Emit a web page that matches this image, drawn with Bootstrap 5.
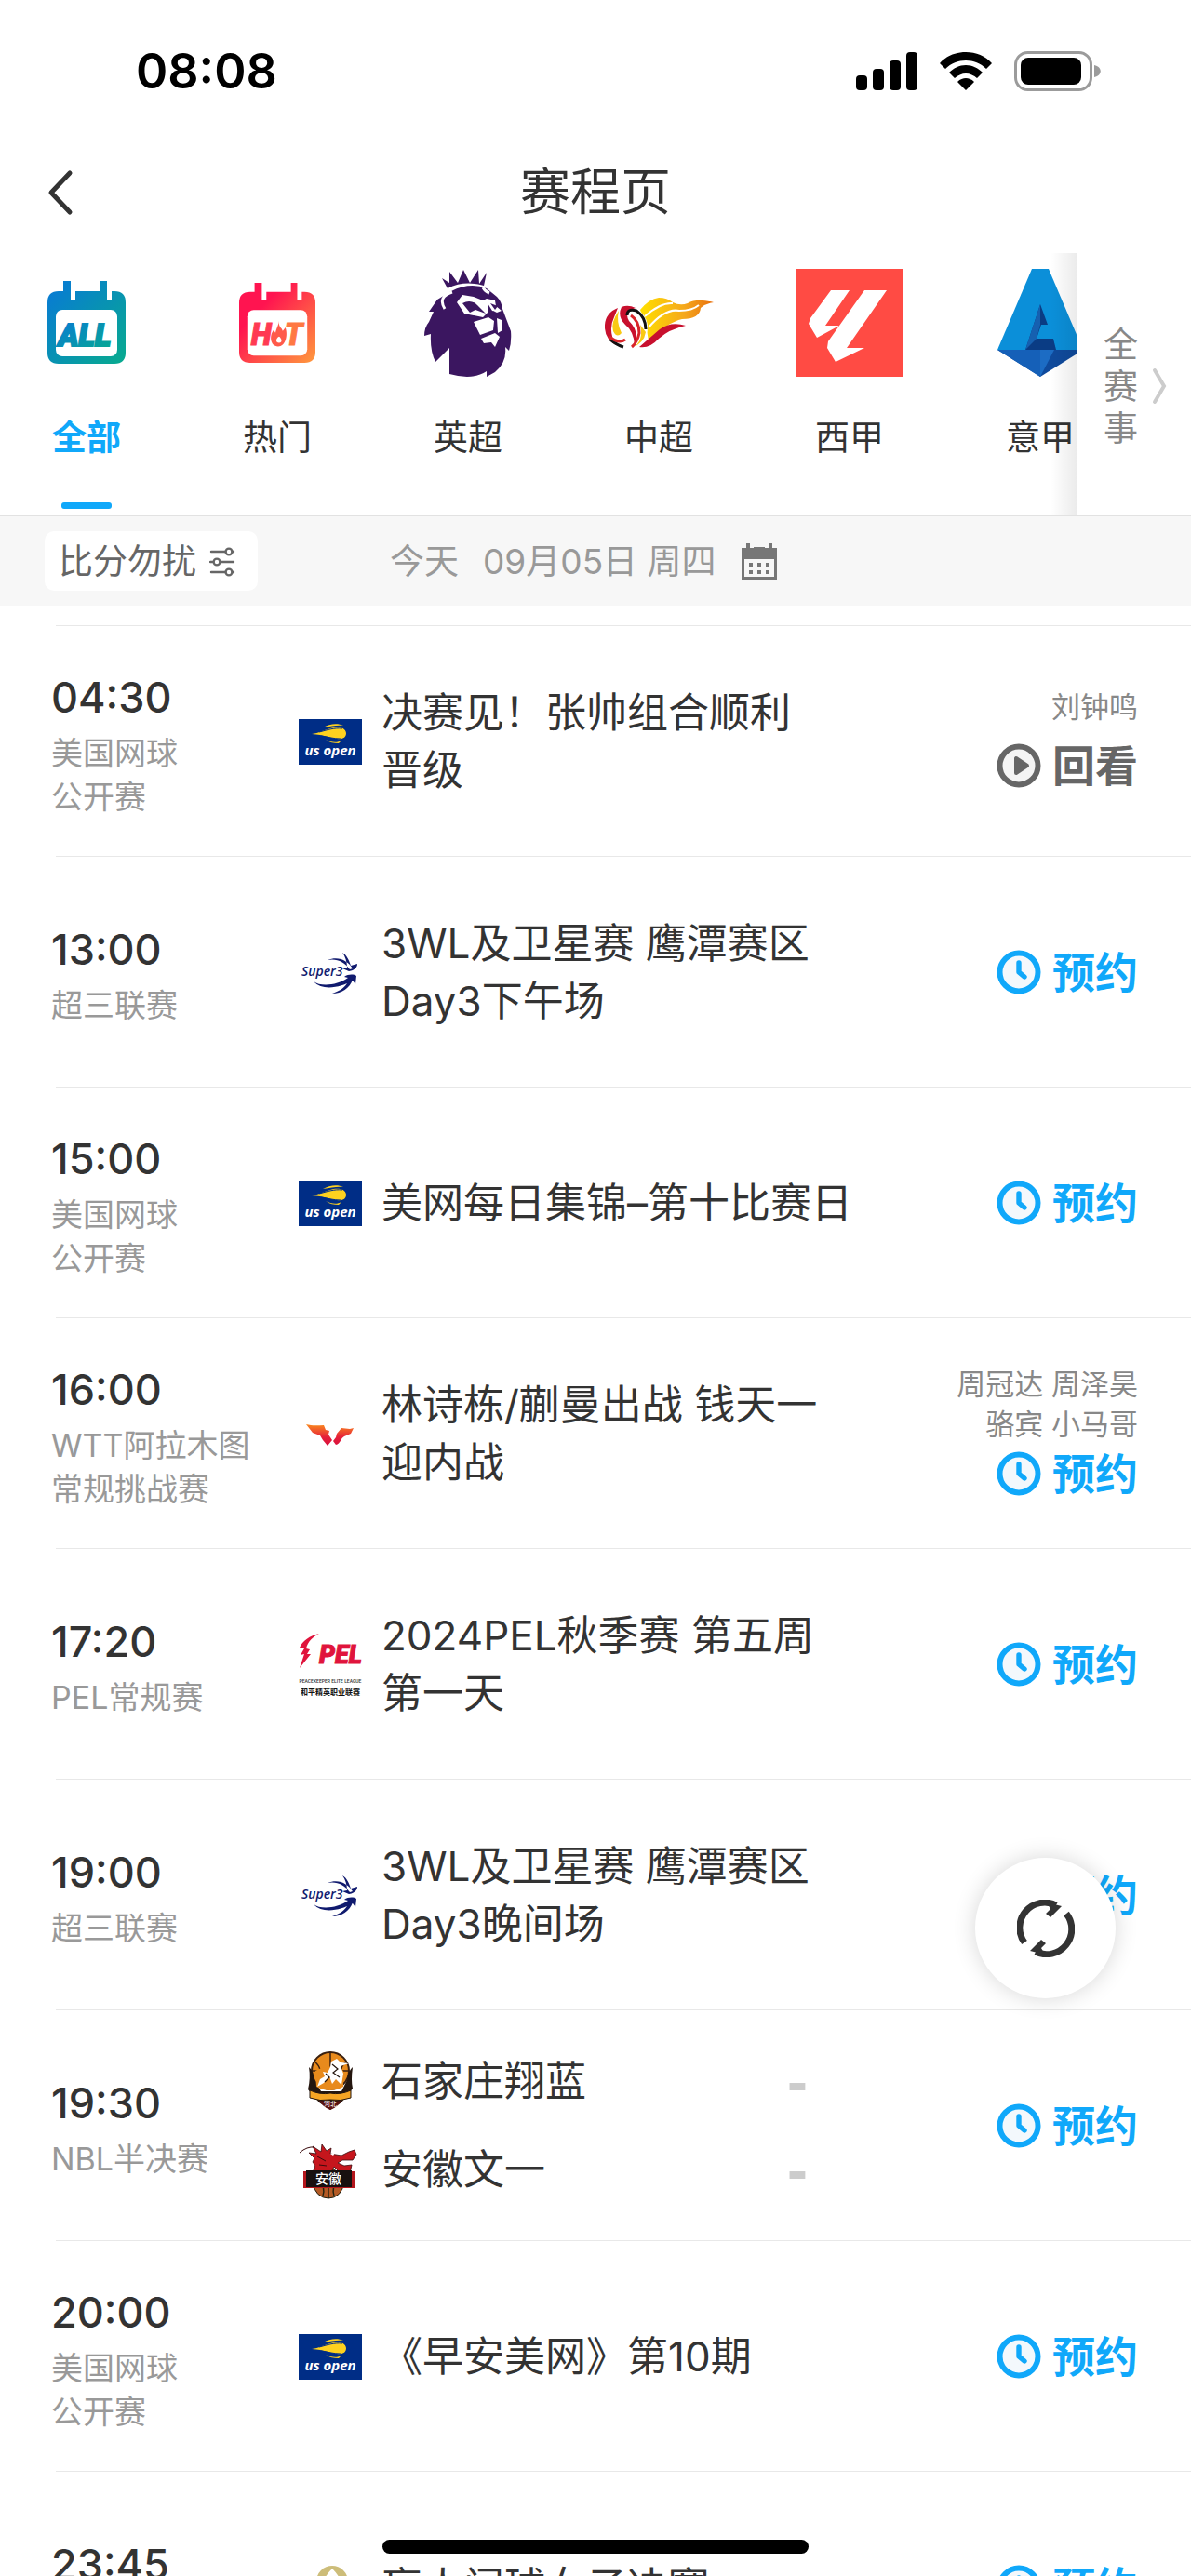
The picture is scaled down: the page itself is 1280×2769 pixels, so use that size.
<!DOCTYPE html>
<html lang="zh-CN">
<head>
<meta charset="utf-8">
<meta name="viewport" content="width=device-width, initial-scale=1">
<title>赛程页</title>
<link href="https://cdn.jsdelivr.net/npm/bootstrap@5.3.0/dist/css/bootstrap.min.css" rel="stylesheet">
<style>
  :root { --ink: #333; --blue: #10a8fa; --muted: #999; --line: #e8e8e8; }
  body { font-family: Inter, "Noto Sans CJK SC", sans-serif; color: var(--ink); background: #fff; }
  svg { display: block; flex: none; }
  button { background: none; border: 0; padding: 0; color: inherit; }
  a { color: inherit; text-decoration: none; }
  .screen { height: 100vh; }
  .statusbar { height: 154px; padding: 0 97px 0 146px; }
  .clock { font-size: 52px; font-weight: 600; line-height: 64px; color: #000; }
  .titlebar { height: 106px; }
  .titlebar h1 { font-size: 54px; font-weight: 400; line-height: 72px; }
  .back { left: 49px; }
  .strip { height: 283px; margin-top: 12px; border-bottom: 1px solid #e2e2e2; }
  .tabs { gap: 89px; padding-left: 35px; padding-top: 17px; }
  .tab-link { width: 116px; flex: none; }
  .tab-link .pic { height: 116px; }
  .tab-link .name { font-size: 37px; line-height: 50px; margin-top: 41px; }
  .tab-link .bar { width: 54px; height: 7px; border-radius: 3px; margin-top: 44px; }
  .tab-link.active .name { color: var(--blue); font-weight: 600; }
  .tab-link.active .bar { background: var(--blue); }
  .all-panel { width: 123px; gap: 15px; padding: 4px 0 0 29px; color: #888; }
  .all-panel span { width: 37px; font-size: 37px; line-height: 45px; }
  .all-panel::before { content: ""; position: absolute; top: 0; bottom: 0; right: 100%; width: 28px; background: linear-gradient(to right, transparent, rgba(0,0,0,.08)); }
  .filterbar { height: 96px; padding-left: 48px; gap: 142px; background: #f7f7f7; font-size: 37px; line-height: 50px; }
  .quiet { height: 64px; padding: 2px 24px 0 15px; gap: 14px; background: #fff; border-radius: 10px; color: #666; }
  .date { color: var(--muted); gap: 26px; padding-top: 2px; }
  .games { padding-top: 21px; margin: 0; }
  .game { height: 248px; margin-left: 60px; padding-right: 57px; border-top: 1px solid var(--line); }
  .when { width: 266px; margin-left: -5px; flex: none; }
  .when time { font-size: 45px; font-weight: 500; line-height: 72px; display: block; }
  .when p { font-size: 34px; line-height: 47px; color: var(--muted); margin: 0; }
  .headline { font-size: 44px; font-weight: 400; line-height: 62px; margin: 0; padding-left: 21px; }
  .hosts { font-size: 31px; line-height: 43px; min-height: 53px; color: #888; margin: 0; }
  .act { font-size: 46px; font-weight: 700; line-height: 64px; gap: 12px; color: var(--blue); }
  .act.replay { color: #666; }
  .team { height: 95px; font-size: 44px; line-height: 62px; }
  .team b { width: 43px; color: #ccc; font: 700 66px/62px "Liberation Sans", sans-serif; }
  .teams { width: 568px; }
  .refresh { width: 151px; height: 151px; right: 81px; bottom: 621px; background: #fff; box-shadow: 0 0 24px rgba(0,0,0,.16); z-index: 2; }
  .homebar { width: 458px; height: 15px; bottom: 24px; background: #000; z-index: 3; }
</style>
</head>
<body>
<svg width="0" height="0" class="position-absolute" aria-hidden="true">
  <defs>
    <linearGradient id="gAll" x1="0" y1="0" x2="1" y2="1"><stop offset="0" stop-color="#0878d8"/><stop offset="1" stop-color="#08ab8e"/></linearGradient>
    <linearGradient id="gHot" x1="0" y1="0" x2="1" y2="1"><stop offset=".3" stop-color="#ff1450"/><stop offset="1" stop-color="#ff9a3d"/></linearGradient>
    <linearGradient id="gFlame" x1="0" y1="0" x2="1" y2="0"><stop offset="0" stop-color="#ffe000"/><stop offset=".6" stop-color="#f5a81c"/><stop offset="1" stop-color="#e8700e"/></linearGradient>
    <linearGradient id="gWtt" x1="0" y1="0" x2="0" y2="1"><stop offset="0" stop-color="#fa8a1e"/><stop offset=".6" stop-color="#e5203a"/><stop offset="1" stop-color="#d8103c"/></linearGradient>
    <symbol id="clock" viewBox="0 0 48 48"><circle cx="24" cy="24" r="20.5" fill="#f3f8fc" stroke="currentColor" stroke-width="6"/><path d="M24 14v10l6 5" fill="none" stroke="currentColor" stroke-width="5.4" stroke-linecap="round" stroke-linejoin="round"/></symbol>
    <symbol id="play" viewBox="0 0 48 48"><circle cx="24" cy="24" r="20.5" fill="#f4f4f4" stroke="currentColor" stroke-width="6"/><path d="M21 16v16l12-8z" fill="currentColor" stroke="currentColor" stroke-width="4" stroke-linejoin="round"/></symbol>
    <symbol id="usopen" viewBox="0 0 68 68">
      <path fill="#002d86" d="M0 10h68v49H0z"/>
      <path fill="#ffd21f" d="M14 26c8-1 12-4 20-6 6-2 16-2 17 5 0 5-4 7-10 6-8-1-13-4-27-5z"/>
      <path fill="#ffd21f" d="M26 19c7-4 16-5 22-2-7-1-13 1-22 2zm3 13c6 3 12 4 17 1l-3 3c-5 0-10-1-14-4z"/>
      <path fill="none" stroke="#002d86" stroke-width="1" d="M22 24c8-2 16-5 25-4M24 28c7 1 13 3 21 3"/>
      <text x="34" y="49" text-anchor="middle" fill="#fff" font-family="Open Sans" font-size="15" font-weight="700" font-style="italic">us open</text>
    </symbol>
    <symbol id="super3" viewBox="0 0 68 68">
      <g fill="#101a6e"><text x="3" y="38" font-family="Open Sans" font-size="14" font-weight="600" font-style="italic">Super3</text>
      <path d="M31 21c10-2 18 2 24 10l3-1c-5-8-15-14-27-9zM47 13c5 3 7 8 9 14l7-2c0 4-3 7-9 8l-7-3 5-1c0-6-2-12-5-16zM16 44c8 6 26 4 37-4l-4-1c4-3 10-3 13-1l-1 9-3-4c-12 7-32 12-42 1zM36 57c9-3 14-7 17-13l5-2c-3 9-12 15-22 15z"/></g>
    </symbol>
    <symbol id="wtt" viewBox="0 0 68 68"><path fill="url(#gWtt)" d="M8 24c7 2 13 1 19 1l2 5 4 1-1 4 4 6-5 6-5-6-3-5-8-3zM59 28l-4 1-9-1-5 6-1 4-3 4 3 4c5-1 5-7 9-9l7-3z"/></symbol>
    <symbol id="pel" viewBox="0 0 68 68">
      <path fill="#e0143c" d="M22 1C12 3 4 9 1 16l5 1-4 7 4-1-5 15 12-15H9l3-5-4-1c2-8 7-12 14-16z"/>
      <text x="22" y="33" fill="#e0143c" stroke="#e0143c" font-family="Roboto" font-size="27" font-weight="900" font-style="italic">PEL</text>
      <text x="34" y="54" text-anchor="middle" fill="#333" font-family="Roboto" font-size="5" font-weight="500">PEACEKEEPER ELITE LEAGUE</text>
      <text x="34" y="67" text-anchor="middle" fill="#111" font-family="Noto Sans CJK SC" font-size="8" font-weight="700">和平精英职业联赛</text>
    </symbol>
  </defs>
</svg>

<div class="screen position-relative overflow-hidden">
  <header>
    <div class="statusbar d-flex align-items-center justify-content-between">
      <span class="clock">08:08</span>
      <div class="d-flex align-items-center gap-4">
        <svg width="66" height="42" viewBox="0 0 66 42"><rect y="25" width="12" height="16" rx="4"/><rect x="18" y="18" width="12" height="23" rx="4"/><rect x="36" y="9" width="12" height="32" rx="4"/><rect x="54" width="12" height="41" rx="4"/></svg>
        <svg width="56" height="42" viewBox="0 0 56 42"><path d="M28 0c11 0 21 4 28 12l-6 6C44 12 36 9 28 9S12 12 6 18l-6-6C7 4 17 0 28 0zm0 14c7 0 13 3 18 8l-6 6c-3-3-8-5-12-5s-9 2-12 5l-6-6c5-5 11-8 18-8zm0 14c3 0 6 1 9 4l-9 9-9-9c3-3 6-4 9-4z"/></svg>
        <svg width="93" height="44" viewBox="0 0 93 44"><rect x="1.5" y="1.5" width="81" height="40" rx="13" fill="none" stroke="#9b9b9b" stroke-width="3"/><rect x="7" y="7" width="65" height="29" rx="8"/><path d="M86 15c9 2 9 11 0 13z" fill="#9b9b9b"/></svg>
      </div>
    </div>
    <div class="titlebar d-flex align-items-center justify-content-center position-relative">
      <button type="button" class="back position-absolute" aria-label="返回"><svg width="32" height="50" viewBox="0 0 32 50"><path d="M26 4L6 25l20 21" fill="none" stroke="#333" stroke-width="5" stroke-linecap="round" stroke-linejoin="round"/></svg></button>
      <h1 class="m-0">赛程页</h1>
    </div>
    <div class="strip d-flex">
      <nav class="tabs d-flex flex-grow-1 overflow-hidden">
        <a href="#" class="tab-link active d-flex flex-column align-items-center">
          <span class="pic d-flex align-items-center"><svg width="84" height="90" viewBox="0 0 84 90"><path fill="url(#gAll)" d="M17 11V0h8v20h5V11h27V0h7v20h5V11h3q12 0 12 12v54q0 12-12 12H12Q0 89 0 77V23Q0 11 12 11z"/><rect x="9" y="31" width="66" height="50" rx="7" fill="#fff"/><text x="40" y="70" text-anchor="middle" fill="url(#gAll)" stroke="url(#gAll)" stroke-width="2" font-family="Roboto" font-size="33" font-weight="900" font-style="italic">ALL</text></svg></span>
          <span class="name">全部</span><span class="bar"></span></a>
        <a href="#" class="tab-link d-flex flex-column align-items-center">
          <span class="pic d-flex align-items-center"><svg width="82" height="88" viewBox="0 0 84 90"><path fill="url(#gHot)" d="M17 11V1h8v19h5V11h27V1h7v19h5V11h3q12 0 12 12v54q0 12-12 12H12Q0 89 0 77V23Q0 11 12 11z"/><rect x="9" y="31" width="66" height="50" rx="7" fill="#fff"/><g fill="#ff3a52" stroke="#ff3a52" font-family="Roboto" font-size="33" font-weight="900" font-style="italic"><text x="13" y="70">H</text><text x="50" y="70" fill="#ff7843" stroke="#ff7843">T</text></g><path fill="#ff5a4a" fill-rule="evenodd" d="M44 43c-1 7 3 7 4 11l3-4c3 9 0 21-8 21-9 0-10-12-5-18l2 3c1-5 3-7 4-13zm0 17c-4 2-4 7 0 7s3-5 0-7z"/></svg></span>
          <span class="name">热门</span></a>
        <a href="#" class="tab-link d-flex flex-column align-items-center">
          <span class="pic"><svg width="94" height="116" viewBox="0 0 94 116"><path fill="#3b1660" d="M19 10l8 5V3l9 12 6-14 7 14 9-14 1 15 8-12-3 14q-21-6-39 3zM29 24q20-10 38-3l11 9q5 5 6 13l9 24q1 12-2 21l-4-4q2 16-11 27l-9 5v-6q-15 10-40 3V85l-15 15q-6-12-5-30l-7 2q0-9 5-15l5-11H5l9-13z"/><path fill="none" stroke="#fff" stroke-width="3" d="M30 25q-16 5-8 18M63 20q2 4 7 6"/><path fill="#fff" d="M35 36l6-8 12 2 10 4 4-2 9 2 1 6 6 5-5 2-4-2-6 2-5 5-20-4zM53 57l16-5 6 4-1 10-14 5zM78 53l5 2 1 11-5 3zM61 75l15-6 5 4-5 11-4-5-8 1z"/><path fill="#3b1660" d="M41 37q9-5 16 2l9 9-11-4-6 3zM71 37l8 3-3 4zM68 37l5 8 4 6-8-3z"/></svg></span>
          <span class="name">英超</span></a>
        <a href="#" class="tab-link d-flex flex-column align-items-center">
          <span class="pic d-flex align-items-center"><svg width="117" height="56" viewBox="0 0 117 56"><path fill="url(#gFlame)" d="M38 14Q48 2 58 1q9 0 15 5 8 4 16 1 10-6 28-1-8 1-14 6-1 12-20 12-15 3-36 24L45 35z"/><path fill="none" stroke="#fff" stroke-width="2" d="M43 21Q60 6 73 7M47 33Q65 12 80 15q14 0 21-6"/><path fill="#c8102e" d="M87 31q-16-5-28 4L37 54q11 2 21-9 11-10 29-14z"/><circle cx="23" cy="33" r="23" fill="#fff"/><path fill="#c8102e" d="M14 12Q-1 18 0 34q1 12 12 18-9-16-2-30zM18 11q7-3 15 1-13 4-7 14 12 12 6 26-1-15-10-22-9-9-4-19z"/><path fill="#f9c913" d="M15 15q-9 13-6 22 4 8 9 2-6-12-3-24zM30 54q12-5 8-24l6 8q-2 12-14 16z"/><path fill="none" stroke="#111" stroke-width="3" d="M24 20q0-8 10-5 10 7 10 20M6 46q7 6 14 8"/><path fill="none" stroke="#d8242a" stroke-width="3" d="M28 20q9 6 9 19-2 10-8 15M5 43q10 8 17 3"/></svg></span>
          <span class="name">中超</span></a>
        <a href="#" class="tab-link d-flex flex-column align-items-center">
          <span class="pic"><svg width="116" height="116" viewBox="0 0 116 116"><path fill="#ff4b44" d="M0 0h116v116H0z"/><path fill="#fff" d="M38 23h20L32 61h15l-24 13-9-15 2-6zM74 23h24L55 85h19l-31 15-9-15 1-7z"/></svg></span>
          <span class="name">西甲</span></a>
        <a href="#" class="tab-link d-flex flex-column align-items-center">
          <span class="pic"><svg width="92" height="116" viewBox="0 0 92 116"><path fill="#0b8fd9" d="M37 0h18l37 87H0z"/><path fill="#0f4a9c" d="M0 87h92l-46 29z"/><path fill="#1560b8" d="M29 87h17v29zM0 87h29l17 29z"/><path fill="#0a3c84" d="M46 38l8 22h-7l-5 15h18l3 12H30z"/><path fill="#1c6cc4" d="M46 87l15 0-15 29z"/><path fill="#1660b0" d="M46 38l-16 49 12-12 4-15z"/></svg></span>
          <span class="name">意甲</span></a>
      </nav>
      <a href="#" class="all-panel position-relative d-flex align-items-center flex-shrink-0"><span>全赛事</span><svg width="16" height="40" viewBox="0 0 16 40"><path d="M3 3l10 17L3 37" fill="none" stroke="#ccc" stroke-width="4" stroke-linecap="round"/></svg></a>
    </div>
  </header>

  <div class="filterbar d-flex align-items-center">
    <button type="button" class="quiet d-flex align-items-center">比分勿扰
      <svg width="28" height="32" viewBox="0 0 28 32" fill="none" stroke="#666" stroke-width="2.4" stroke-linecap="round"><path d="M2 5h15M12 16h14M2 27h15M25 5h1M1 16h2M25 27h1"/><circle cx="21" cy="5" r="3.4"/><circle cx="8" cy="16" r="3.4"/><circle cx="21" cy="27" r="3.4"/></svg>
    </button>
    <div class="date d-flex align-items-center"><span>今天</span><span>09月05日 周四</span>
      <svg width="40" height="40" viewBox="0 0 40 40"><path fill="#777" fill-rule="evenodd" d="M1 5h5V0h4v5h4V4h12v1h4V0h4v5h5v34H1zM4 17v19h32V17z"/><path fill="#777" d="M9 21h4v4H9zm9 0h4v4h-4zm9 0h4v4h-4zM9 29h4v4H9zm9 0h4v4h-4zm9 0h4v4h-4z"/></svg>
    </div>
  </div>

  <ul class="games list-unstyled">
    <li class="game d-flex align-items-center">
      <div class="when"><time>04:30</time><p>美国网球<br>公开赛</p></div>
      <svg width="68" height="68"><use href="#usopen"/></svg>
      <h2 class="headline flex-grow-1">决赛见！张帅组合顺利<br>晋级</h2>
      <div class="d-flex flex-column align-items-end"><p class="hosts text-end">刘钟鸣</p><button type="button" class="act replay d-flex align-items-center"><svg width="48" height="48"><use href="#play"/></svg>回看</button></div>
    </li>
    <li class="game d-flex align-items-center">
      <div class="when"><time>13:00</time><p>超三联赛</p></div>
      <svg width="68" height="68"><use href="#super3"/></svg>
      <h2 class="headline flex-grow-1">3WL及卫星赛 鹰潭赛区<br>Day3下午场</h2>
      <button type="button" class="act d-flex align-items-center"><svg width="48" height="48"><use href="#clock"/></svg>预约</button>
    </li>
    <li class="game d-flex align-items-center">
      <div class="when"><time>15:00</time><p>美国网球<br>公开赛</p></div>
      <svg width="68" height="68"><use href="#usopen"/></svg>
      <h2 class="headline flex-grow-1">美网每日集锦–第十比赛日</h2>
      <button type="button" class="act d-flex align-items-center"><svg width="48" height="48"><use href="#clock"/></svg>预约</button>
    </li>
    <li class="game d-flex align-items-center">
      <div class="when"><time>16:00</time><p>WTT阿拉木图<br>常规挑战赛</p></div>
      <svg width="68" height="68"><use href="#wtt"/></svg>
      <h2 class="headline flex-grow-1">林诗栋/蒯曼出战 钱天一<br>迎内战</h2>
      <div class="d-flex flex-column align-items-end"><p class="hosts text-end">周冠达 周泽昊<br>骆宾 小马哥</p><button type="button" class="act d-flex align-items-center"><svg width="48" height="48"><use href="#clock"/></svg>预约</button></div>
    </li>
    <li class="game d-flex align-items-center">
      <div class="when"><time>17:20</time><p>PEL常规赛</p></div>
      <svg width="68" height="68"><use href="#pel"/></svg>
      <h2 class="headline flex-grow-1">2024PEL秋季赛 第五周<br>第一天</h2>
      <button type="button" class="act d-flex align-items-center"><svg width="48" height="48"><use href="#clock"/></svg>预约</button>
    </li>
    <li class="game d-flex align-items-center">
      <div class="when"><time>19:00</time><p>超三联赛</p></div>
      <svg width="68" height="68"><use href="#super3"/></svg>
      <h2 class="headline flex-grow-1">3WL及卫星赛 鹰潭赛区<br>Day3晚间场</h2>
      <button type="button" class="act d-flex align-items-center"><svg width="48" height="48"><use href="#clock"/></svg>预约</button>
    </li>
    <li class="game d-flex align-items-center">
      <div class="when"><time>19:30</time><p>NBL半决赛</p></div>
      <div class="teams me-auto">
        <div class="team d-flex align-items-center">
          <svg width="68" height="68" viewBox="0 0 68 68"><circle cx="34" cy="23" r="20" fill="#e88a1c" stroke="#3a2010" stroke-width="2"/><path fill="none" stroke="#3a2010" stroke-width="1.5" d="M34 3v20M17 13q10 8 4 20M51 13q-9 8-4 20M14 23h40"/><path fill="#24160f" d="M11 19q5 4 6 14l7 12h22l6-12q1-10 6-14-2 14 0 23L46 57 34 65 22 57 10 43q3-12 1-24z"/><path fill="#e88a1c" d="M18 23q16-9 30 0v17q-14 8-29 0z"/><path fill="#fff" d="M35 13l6-3 4 4 9 1-9 3 3 8-2 12-6-6-4 5-3-8-6 7-7 4 3-8 5-3-2-5 5 1 3-6z"/><path fill="none" stroke="#24160f" stroke-width="1.2" d="M36 16l6 5-5 4 7 5M29 26l4 4-5 5"/><path fill="#f6a524" stroke="#24160f" d="M12 44q11 5 22 3 11 2 22-3v8q-11 4-22 2-11 2-22-2z"/><path fill="#5b1210" d="M22 55q12 2 24 0-4 7-12 10-8-3-12-10z"/><text x="34" y="61" text-anchor="middle" font-size="7" font-family="Noto Sans CJK SC" fill="#fff">河北</text></svg>
          <span class="headline flex-grow-1">石家庄翔蓝</span><b>-</b>
        </div>
        <div class="team d-flex align-items-center">
          <svg width="68" height="68" viewBox="0 0 68 68"><circle cx="32" cy="49" r="16" fill="#b35a24" stroke="#221"/><path fill="none" stroke="#221" stroke-width="1.4" d="M32 42v23M22 48q7 5 4 14M42 48q-7 5-4 14"/><path fill="#c5161d" stroke="#3a0a0c" stroke-width=".8" d="M15 36q5-5 0-10l2-4-6-6 8 1-4-8 9 6 1-8 5 7 5-3-1 6 12 2 8-4 6-2 2 5-4 6H47l-5 3 7 3 8-1-2 9q-8 1-12-2l-5-5-3 6z"/><path fill="none" stroke="#3a0a0c" d="M1 16q8-7 16-6M20 20l9 5M22 29l8 1"/><path fill="#fff" d="M34 17l5-1-2 3z"/><path fill="#b3161c" d="M5 36h55v18H5z"/><path fill="#17100f" d="M8 35h49v18H8z"/><text x="32" y="49" text-anchor="middle" font-size="14" font-family="Noto Sans CJK SC" font-weight="500" fill="#fff">安徽</text></svg>
          <span class="headline flex-grow-1">安徽文一</span><b>-</b>
        </div>
      </div>
      <button type="button" class="act d-flex align-items-center"><svg width="48" height="48"><use href="#clock"/></svg>预约</button>
    </li>
    <li class="game d-flex align-items-center">
      <div class="when"><time>20:00</time><p>美国网球<br>公开赛</p></div>
      <svg width="68" height="68"><use href="#usopen"/></svg>
      <h2 class="headline flex-grow-1">《早安美网》第10期</h2>
      <button type="button" class="act d-flex align-items-center"><svg width="48" height="48"><use href="#clock"/></svg>预约</button>
    </li>
    <li class="game d-flex align-items-center">
      <div class="when"><time>23:45</time><p>&nbsp;</p></div>
      <svg width="68" height="68" viewBox="0 0 68 68"><circle cx="36" cy="28" r="17" fill="#cdbd7a"/><path fill="#fff" d="M36 14q-10 10-12 22h24Q46 24 36 14z"/></svg>
      <h2 class="headline flex-grow-1">盲人门球女子决赛</h2>
      <button type="button" class="act d-flex align-items-center"><svg width="48" height="48"><use href="#clock"/></svg>预约</button>
    </li>
  </ul>

  <button type="button" class="refresh position-absolute rounded-circle d-flex align-items-center justify-content-center" aria-label="刷新">
    <svg width="62" height="62" viewBox="0 0 62 62" fill="none" stroke="#333" stroke-width="7"><path d="M8 46A27 27 0 0 1 42 6M53 15A27 27 0 0 1 20 56"/><path fill="#333" stroke="none" d="M32 3l16 4-12 12-5-4 5-5zM30 59l-16-4 12-12 5 4-5 5z"/></svg>
  </button>
  <div class="homebar position-absolute start-50 translate-middle-x rounded-pill"></div>
</div>
<script src="https://cdn.jsdelivr.net/npm/bootstrap@5.3.0/dist/js/bootstrap.bundle.min.js"></script>
</body>
</html>
